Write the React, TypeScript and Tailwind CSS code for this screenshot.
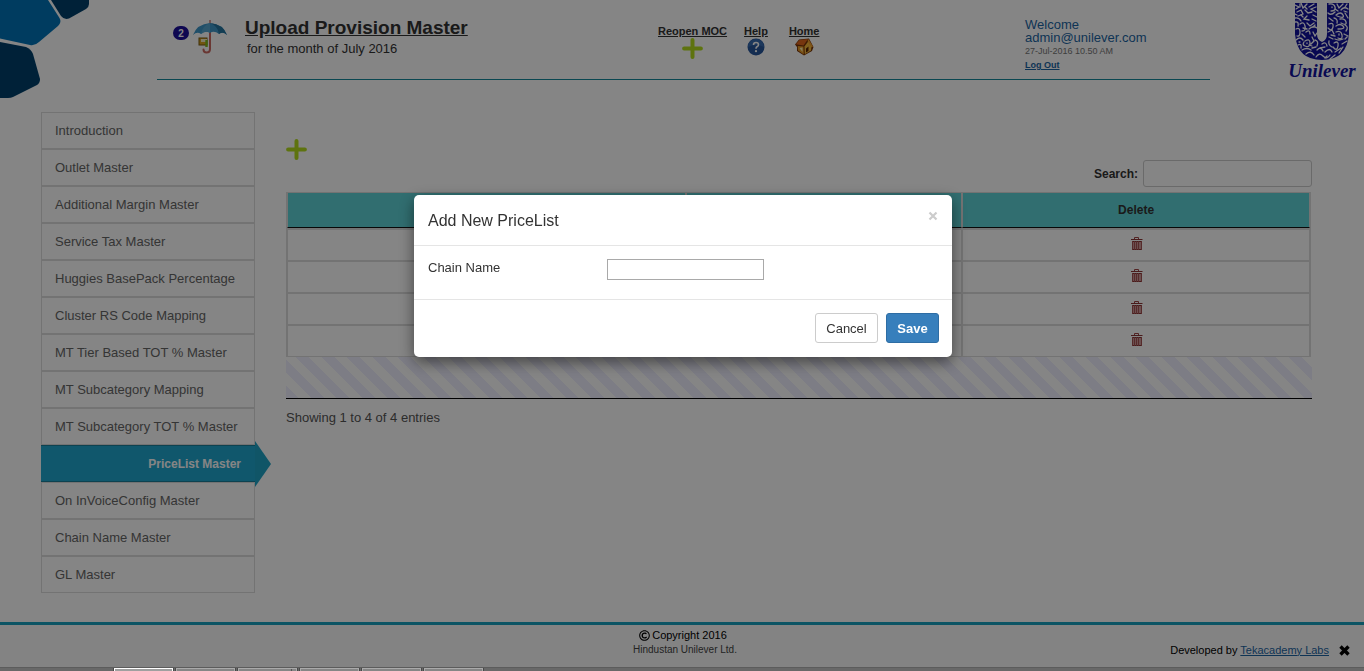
import React from "react";
import { FaRegCopyright } from "react-icons/fa";

const menu = [
  "Introduction",
  "Outlet Master",
  "Additional Margin Master",
  "Service Tax Master",
  "Huggies BasePack Percentage",
  "Cluster RS Code Mapping",
  "MT Tier Based TOT % Master",
  "MT Subcategory Mapping",
  "MT Subcategory TOT % Master",
  "PriceList Master",
  "On InVoiceConfig Master",
  "Chain Name Master",
  "GL Master",
];

const active = "PriceList Master";

function CornerShapes() {
  return (
    <svg className="absolute left-0 top-0" width="92" height="100" viewBox="0 0 92 100" aria-hidden="true">
      <path d="M0 0H48L59.500 18Q62 22 58 26L39 42Q35 46 30 45L0 38.500Z" fill="#0074b8" />
      <path d="M51 0H89V4Q89 7 86 9L69 18.500Q64 20 61 16Z" fill="#00406c" />
      <path d="M0 42L26 47Q31 49 33 54L40 79Q40 83 37 85L13 97Q11 98 8 98H0Z" fill="#00406c" />
    </svg>
  );
}

function Umbrella() {
  return (
    <svg width="34" height="34" viewBox="0 0 34 34" aria-hidden="true">
      <path d="M17 0V4" stroke="#c98a84" strokeWidth="1.6" />
      <path d="M17 11V29Q17 32.500 13.500 32.500Q10.500 32.500 10.500 29.500" fill="none" stroke="#cb6a62" strokeWidth="2" strokeLinecap="round" />
      <path d="M0 15Q4 4 17 3Q30 4 34 15Q30 11 26 14Q21 10 17 13Q13 10 8 14Q4 11 0 15Z" fill="#3f97c9" />
      <path d="M17 3Q9 6 8 14Q13 10 17 13Z" fill="#56a8d2" />
      <path d="M17 3Q25 6 26 14Q30 11 34 15Q30 4 17 3Z" fill="#26759f" />
      <rect x="6" y="18" width="8" height="7" fill="#d9a520" stroke="#7d5b10" />
      <rect x="8" y="19" width="6" height="3" fill="#f6edc6" />
      <path d="M13.500 20V27" stroke="#7fbc1c" strokeWidth="2.400" />
    </svg>
  );
}

function Plus({ size }: { size: number }) {
  return (
    <svg width={size} height={size} viewBox="0 0 20 20" aria-hidden="true">
      <path d="M10 2V18M2 10H18" stroke="#b4dc1e" strokeWidth="3.800" strokeLinecap="round" />
    </svg>
  );
}

function HelpBall() {
  return (
    <svg width="18" height="18" viewBox="0 0 18 18" aria-hidden="true">
      <circle cx="9" cy="9" r="8.500" fill="#27579c" />
      <path d="M1 9A8 8 0 0 1 17 9Q9 5 1 9Z" fill="#376bb0" />
      <path d="M6.500 7Q6.500 4.500 9 4.500Q11.500 4.500 11.500 6.700Q11.500 8 10 8.800Q9 9.400 9 10.800" fill="none" stroke="#fff" strokeWidth="1.600" />
      <circle cx="9" cy="13.200" r="1.100" fill="#fff" />
    </svg>
  );
}

function HomeCube() {
  return (
    <svg width="19" height="18" viewBox="0 0 19 18" aria-hidden="true">
      <path d="M0 6.500L4 1.500L14 .5L18.500 9L17 13L9 17.500L2 13V9Z" fill="#7a3408" />
      <path d="M.800 6.300L4.500 2L13 1L8.500 7.500Z" fill="#e2691d" />
      <path d="M2.800 8L8.500 8.500L8.800 16.500L3 12.500Z" fill="#e99a25" />
      <path d="M9.500 8.500L13.500 3L16.500 8L16 12.500L9.800 16.200Z" fill="#f7bb3c" />
      <path d="M13.500 1L18 8.500L16.500 9.500L12.500 3Z" fill="#f0a030" />
      <path d="M11 10.500L13.500 8.500V13L11 14.500Z" fill="#5c2503" />
      <path d="M4.500 10L7.500 9.500V14Z" fill="#fff0b0" />
    </svg>
  );
}

function UnileverLogo() {
  return (
    <div className="flex w-[72px] flex-col items-center">
      <svg width="54" height="57" viewBox="0 0 54 57" role="img" aria-label="Unilever emblem">
        <path d="M0 0H22V31Q22 37 27 39Q32 37 32 31V0H54V31Q52 57 27 57Q2 57 0 31Z" fill="#12129e" />
        <g fill="none" stroke="#fff" strokeWidth="1.300" strokeLinecap="round">
          <path d="M0 2L4 4L1 6M6 0L8 5L12 1M14 4L19 1M21 4L16 6L21 9M2 9L6 7L8 11L3 13M10 7L13 10L17 9M12 13L9 16L14 17M18 12L22 14M17 16L21 18" />
          <path d="M0 15Q4 14 6 18M0 19Q4 18 3 23M5 21Q9 18 10 23T7 28M12 20L15 23L19 20M14 26Q18 22 22 25M11 29Q15 26 15 31M1 26Q5 24 5 29T2 33M7 31L10 34M18 29L20 33L22 30" />
          <path d="M1 37Q5 33 8 37M10 38Q15 35 15 40T10 43Q7 42 9 39M12 40V40.500M3 42Q7 40 6 45M17 34L19 38L16 41M20 37Q24 38 22 43M7 47Q12 44 16 47M11 51Q16 47 19 52M17 45L21 44M22 47Q26 43 28 48" />
          <path d="M21 54Q24 49 28 53T35 52M27 41Q31 38 32 43M25 45L30 44M30 49Q35 44 37 49M34 38Q33 42 37 44M39 40Q44 37 43 43T38 44M40 49L46 45M44 50L48 44M35 56L40 52M47 41L52 38" />
          <path d="M34 1Q39 0 40 4T36 8M37 4V4.500M42 1L44 5L48 1M46 7Q49 3 53 6M52 1L50 4M33 10Q36 13 40 9M41 12Q46 8 48 12T42 13M50 10L53 15M34 15L38 18M39 15Q43 16 42 20" />
          <path d="M34 21Q39 19 38 24T33 25M45 16Q50 15 51 19T46 20M41 23Q45 20 48 23T43 26M50 22Q54 24 51 28M33 29L37 27L39 31M41 29Q46 27 47 32T43 35M49 31L53 33M34 34L38 36M40 36Q44 38 48 36M50 36L52 34" />
          <path d="M0 11L2 12M8 14L6 12M5 4L5 1M10 4L12 6M20 22L18 24M8 25L12 26M43 8L40 6M49 8L52 9M36 32L40 33M44 31L44 32M30 55L32 53M14 42L17 43M4 39L5 39" />
        </g>
      </svg>
      <span className="mt-0.5 font-['Liberation_Serif',serif] text-[19px] font-bold italic leading-[18px] text-[#12129e]">Unilever</span>
    </div>
  );
}

function Trash() {
  return (
    <svg width="12" height="14" viewBox="0 0 12 14" aria-hidden="true">
      <path d="M1 4H11V13H1Z" fill="#d09a9a" />
      <path d="M3.500 2V.5H7.500V2" fill="none" stroke="#a04444" />
      <path d="M0 2.500H11.500M1 4.500H11M1 12.500H11" stroke="#8c3434" />
      <path d="M1.500 4V13M3.500 4V13M5.500 4V13M7.500 4V13M10.500 4V13" stroke="#a65454" />
    </svg>
  );
}

function QuickLink({ label, children }: { label: string; children: React.ReactNode }) {
  return (
    <a href="#" className="flex flex-col items-center text-[11px] font-bold leading-[14px] text-[#333] underline">
      {label}
      {children}
    </a>
  );
}

function Header() {
  return (
    <header className="flex h-20">
      <div className="ml-[157px] grid flex-1 grid-cols-[501fr_367fr_185fr] border-b border-[#14899b]">
        <div className="flex items-start pl-4 pt-4">
          <span className="mt-2.5 flex h-3.5 w-4 items-center justify-center rounded-full bg-[#1c0f9c] text-[10px] font-bold text-white">2</span>
          <div className="ml-1 mt-1">
            <Umbrella />
          </div>
          <div className="ml-[18px]">
            <h1 className="text-[19px] font-bold leading-6 text-[#333] underline">Upload Provision Master</h1>
            <p className="pl-0.5 text-[13px] leading-[18px] text-[#333]">for the month of July 2016</p>
          </div>
        </div>
        <nav className="flex items-start gap-[17px] pt-6">
          <QuickLink label="Reopen MOC">
            <Plus size={21} />
          </QuickLink>
          <QuickLink label="Help">
            <HelpBall />
          </QuickLink>
          <div className="pl-1">
            <QuickLink label="Home">
              <HomeCube />
            </QuickLink>
          </div>
        </nav>
        <div className="flex flex-col items-start pt-[18px] text-[13px] leading-[13px] text-[#1c65a3]">
          <span>Welcome</span>
          <span>admin@unilever.com</span>
          <span className="text-[9px] leading-[14px] text-[#777]">27-Jul-2016 10.50 AM</span>
          <a href="#" className="text-[9px] font-bold leading-[14px] text-[#1c65a3] underline">
            Log Out
          </a>
        </div>
      </div>
      <div className="flex w-[154px] justify-end pr-1.5 pt-[3px]">
        <UnileverLogo />
      </div>
    </header>
  );
}

function Sidebar() {
  return (
    <nav className="w-[214px] shrink-0">
      <ul>
        {menu.map((item) =>
          item === active ? (
            <li key={item} className="relative">
              <a href="#" aria-current="page" className="flex h-[37px] items-center justify-end border-y border-[#197f99] bg-[#1fa8cf] pr-3.5 text-xs font-bold text-white">
                {item}
              </a>
              <svg className="absolute -top-1 left-full" width="16" height="46" viewBox="0 0 16 46" aria-hidden="true">
                <path d="M0 0L16 23L0 46Z" fill="#1fa3c6" />
              </svg>
            </li>
          ) : (
            <li key={item}>
              <a href="#" className="flex h-[37px] items-center border border-[#ddd] px-[13px] text-[13px] text-[#666]">
                {item}
              </a>
            </li>
          ),
        )}
      </ul>
    </nav>
  );
}

function PriceTable() {
  return (
    <section className="mr-[52px] min-w-0 flex-1 pt-[27px]">
      <button type="button" aria-label="Add price list" className="block">
        <Plus size={21} />
      </button>
      <div className="flex items-center justify-end gap-[5px]">
        <label htmlFor="search" className="text-xs font-bold text-[#333]">
          Search:
        </label>
        <input id="search" type="search" className="h-[27px] w-[169px] rounded-[3px] border border-[#ccc] bg-white px-2 text-[13px]" />
      </div>
      <div className="mt-[5px] border-b border-black bg-[repeating-linear-gradient(45deg,#f0f0ff_0px,#f0f0ff_9px,#ffffff_9px,#ffffff_18px)] pb-[41px]">
        <div className="bg-white pr-px">
          <table className="w-full table-fixed border-separate border-spacing-0 border-x border-[#ddd] text-xs">
            <colgroup>
              <col className="w-[39%]" />
              <col className="w-[27%]" />
              <col className="w-[34%]" />
            </colgroup>
            <thead>
              <tr>
                {["", "", "Delete"].map((head, i) => (
                  <th key={i} className="h-9 border border-[#ddd] border-b-[#111] bg-[#5ed3d7] p-0 font-bold text-[#333]">
                    {head}
                  </th>
                ))}
              </tr>
            </thead>
            <tbody>
              {[0, 1, 2, 3].map((row) => (
                <tr key={row} className="group">
                  <td className="h-8 border border-[#ddd] p-0 group-first:h-[33px] group-first:border-t-2" />
                  <td className="h-8 border border-[#ddd] p-0 group-first:h-[33px] group-first:border-t-2" />
                  <td className="h-8 border border-[#ddd] p-0 pb-0.5 pl-0.5 group-first:h-[33px] group-first:border-t-2">
                    <button type="button" aria-label="Delete row" className="mx-auto block">
                      <Trash />
                    </button>
                  </td>
                </tr>
              ))}
            </tbody>
          </table>
        </div>
      </div>
      <p className="mt-2.5 text-[13px] leading-[18px] text-[#555]">Showing 1 to 4 of 4 entries</p>
    </section>
  );
}

function Footer() {
  return (
    <footer className="grid h-[45px] grid-cols-[1fr_auto_1fr] border-t-3 border-[#17a2c0] bg-[#fcfcfc] text-[11px] text-black">
      <div className="col-start-2 pl-1.5 pt-[3px] text-center">
        <p className="flex items-center justify-center gap-0.5 pr-1 leading-[15px]">
          <FaRegCopyright size={11} />
          Copyright 2016
        </p>
        <p className="text-[10px] leading-[14px] text-[#444]">Hindustan Unilever Ltd.</p>
      </div>
      <div className="flex items-center justify-end pr-3.5 pt-2">
        <span>
          Developed by{" "}
          <a href="#" className="text-[#1c65a3] underline">
            Tekacademy Labs
          </a>
        </span>
        <button type="button" aria-label="Close footer" className="ml-2.5">
          <svg width="11" height="11" viewBox="0 0 11 11" aria-hidden="true">
            <path d="M1.500 1.500L9.500 9.500M9.500 1.500L1.500 9.500" stroke="#000" strokeWidth="3.400" />
          </svg>
        </button>
      </div>
    </footer>
  );
}

function WindowTabs() {
  return (
    <div className="flex h-1 gap-px overflow-hidden border-t border-[#5c5c5c] bg-[#686868] pl-[113px]" aria-hidden="true">
      {[0, 1, 2, 3, 4, 5].map((tab) => (
        <div key={tab} className="group h-1 w-[61px] border-x border-[#484848]">
          <div className="flex h-full justify-end border border-b-0 border-[#aaa] bg-[#868686] group-first:border-white group-first:bg-[#a0a0a0]">
            {tab === 2 && <div className="mr-1 w-px bg-[#555]" />}
          </div>
        </div>
      ))}
    </div>
  );
}

function AddDialog() {
  return (
    <div className="fixed inset-x-0 bottom-1 top-0 bg-black/48 pl-4 pr-3.5 pt-[195px]">
      <div role="dialog" aria-modal="true" aria-labelledby="dialog-title" className="mx-auto w-[538px] max-w-full rounded-[5px] bg-white text-[13px] text-[#333] shadow-[0_5px_15px_rgba(0,0,0,0.5)]">
        <div className="flex h-[51px] items-center justify-between border-b border-[#e5e5e5] px-3.5">
          <h2 id="dialog-title" className="pt-0.5 text-base">
            Add New PriceList
          </h2>
          <button type="button" aria-label="Close" className="mb-2 text-[#ccc]">
            <svg width="10" height="10" viewBox="0 0 10 10" aria-hidden="true">
              <path d="M1.500 1.500L8.500 8.500M8.500 1.500L1.500 8.500" stroke="currentColor" strokeWidth="2.200" />
            </svg>
          </button>
        </div>
        <div className="flex h-[54px] items-start border-b border-[#e5e5e5] px-3.5 pt-[13px]">
          <label htmlFor="chain" className="w-[179px] leading-[18px]">
            Chain Name
          </label>
          <input id="chain" type="text" className="h-[21px] w-[157px] border border-[#a9a9a9] px-1" />
        </div>
        <div className="flex justify-end gap-2 px-[13px] pb-3.5 pt-[13px]">
          <button type="button" className="h-[30px] w-[63px] rounded-[3px] border border-[#ccc] bg-white pt-px">
            Cancel
          </button>
          <button type="button" className="h-[30px] w-[53px] rounded-[3px] border border-[#2e6da4] bg-[#377fbc] pt-px font-bold text-white">
            Save
          </button>
        </div>
      </div>
    </div>
  );
}

export default function App() {
  return (
    <div className="relative flex min-h-screen flex-col bg-white font-['Liberation_Sans',Arial,sans-serif]">
      <CornerShapes />
      <Header />
      <main className="flex flex-1 gap-[31px] pb-7 pl-[41px] pt-8">
        <Sidebar />
        <PriceTable />
      </main>
      <Footer />
      <WindowTabs />
      <AddDialog />
    </div>
  );
}
